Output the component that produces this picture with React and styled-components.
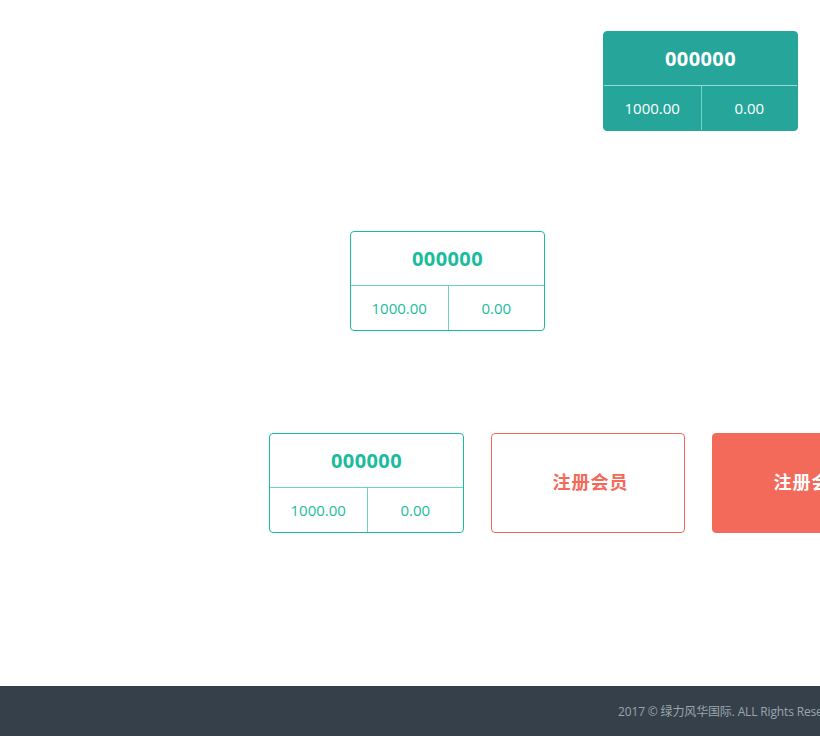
import styled, { createGlobalStyle } from "styled-components";

const Global = createGlobalStyle`
html,body{margin:0;padding:0;background:#fff;overflow:hidden;}
body{font-family:"Open Sans","Noto Sans CJK SC",sans-serif;}
`;

export default function App() {
  return (
    <Page>
      <Global />
      <Main>
        <Row $left={603} $top={31}>
          <Card $filled>
            <Head $filled>000000</Head>
            <Foot $filled>
              <Cell $filled>1000.00</Cell>
              <Cell $filled>0.00</Cell>
            </Foot>
          </Card>
        </Row>
        <Row $left={350} $top={100}>
          <Card>
            <Head>000000</Head>
            <Foot>
              <Cell>1000.00</Cell>
              <Cell>0.00</Cell>
            </Foot>
          </Card>
        </Row>
        <Row $left={269} $top={102} $gap={27}>
          <Card>
            <Head>000000</Head>
            <Foot>
              <Cell>1000.00</Cell>
              <Cell>0.00</Cell>
            </Foot>
          </Card>
          <Register>注册会员</Register>
          <Register $filled>注册会员</Register>
        </Row>
      </Main>
      <Footer>2017 © 绿力风华国际. ALL Rights Reserved.</Footer>
    </Page>
  );
}

const Page = styled.div`
  width: 820px;
  height: 736px;
  display: flex;
  flex-direction: column;
  overflow: hidden;
`;
const Main = styled.div`
  flex: 1;
  display: flex;
  flex-direction: column;
`;
const Row = styled.div`
  display: flex;
  gap: ${(p) => p.$gap || 0}px;
  padding-left: ${(p) => p.$left}px;
  margin-top: ${(p) => p.$top}px;
  flex-shrink: 0;
  width: max-content;
`;
const Card = styled.div`
  width: 195px;
  height: 100px;
  box-sizing: border-box;
  border-radius: 4px;
  display: flex;
  flex-direction: column;
  flex-shrink: 0;
  background: ${(p) => (p.$filled ? "#26a69a" : "#fff")};
  border: 1px solid ${(p) => (p.$filled ? "#26a69a" : "#1abc9c")};
  color: ${(p) => (p.$filled ? "#fff" : "#1abc9c")};
`;
const Head = styled.div`
  height: 53px;
  display: flex;
  align-items: center;
  justify-content: center;
  font-size: 20px;
  font-weight: 700;
  letter-spacing: 0.4px;
  border-bottom: 1px solid ${(p) => (p.$filled ? "#9ed8d2" : "#6fd3bf")};
`;
const Foot = styled.div`
  flex: 1;
  display: grid;
  grid-template-columns: 1fr 1fr;
`;
const Cell = styled.div`
  display: flex;
  align-items: center;
  justify-content: center;
  font-size: 15px;
  & + & {
    border-left: 1px solid ${(p) => (p.$filled ? "#9ed8d2" : "#6fd3bf")};
  }
`;
const Register = styled.div`
  width: 194px;
  height: 100px;
  box-sizing: border-box;
  border-radius: 4px;
  flex-shrink: 0;
  display: flex;
  align-items: center;
  justify-content: center;
  padding: 0 0 5px 5px;
  font-size: 18px;
  font-weight: 700;
  letter-spacing: 1px;
  font-family: "Noto Sans CJK SC", sans-serif;
  background: ${(p) => (p.$filled ? "#f36a5a" : "#fff")};
  color: ${(p) => (p.$filled ? "#fff" : "#f36a5a")};
  border: 1px solid #f36a5a;
`;
const Footer = styled.div`
  height: 50px;
  flex-shrink: 0;
  background: #36404a;
  color: #98a6ad;
  font-size: 12px;
  letter-spacing: -0.15px;
  display: flex;
  align-items: center;
  padding-left: 618px;
  white-space: nowrap;
  font-family: "Open Sans", "Noto Sans CJK SC", sans-serif;
`;
